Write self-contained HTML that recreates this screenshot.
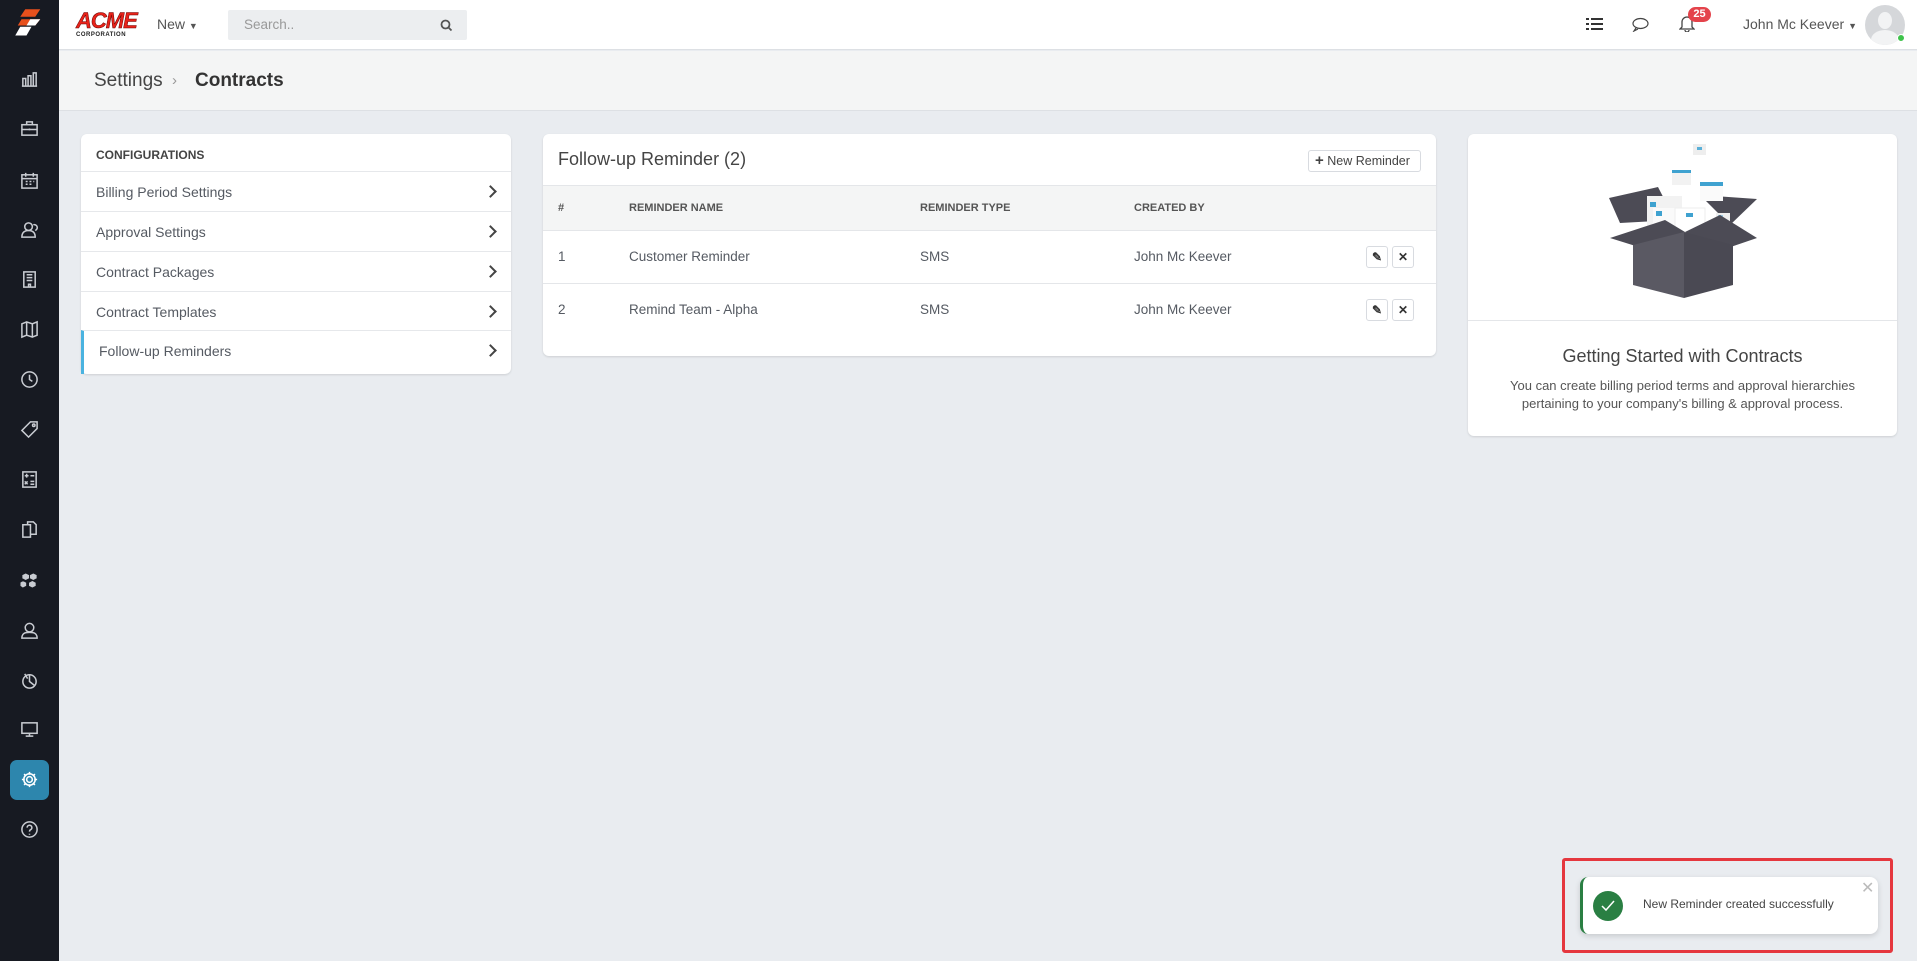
<!DOCTYPE html>
<html><head><meta charset="utf-8"><style>
*{box-sizing:border-box;margin:0;padding:0}
body{width:1917px;height:961px;overflow:hidden;background:#e9ecf0;font-family:"Liberation Sans",sans-serif;color:#555a62;position:relative}
.abs{position:absolute}
#side{left:0;top:0;width:59px;height:961px;background:#171a22}
#side svg{position:absolute;left:20px;width:19px;height:19px;fill:none;stroke:#c9ccd2;stroke-width:1.6}
#top{left:59px;top:0;width:1858px;height:50px;background:#fff;border-bottom:1px solid #dde0e4}
#crumb{left:59px;top:51px;width:1858px;height:60px;background:#f4f5f5;border-bottom:1px solid #dde0e4}
.card{position:absolute;background:#fff;border-radius:6px;box-shadow:0 1px 2px rgba(0,0,0,.12)}
.row{position:absolute;left:0;right:0;border-top:1px solid #e6e8eb;font-size:14px;color:#555a62}
.row span{position:absolute;left:15px}
.chev{position:absolute;right:16px;width:9px;height:9px;border-right:2px solid #444;border-top:2px solid #444;transform:rotate(45deg)}
.th{position:absolute;font-size:11px;font-weight:bold;color:#555;top:16px}
.td{position:absolute;font-size:13.5px;color:#555a62}
.ib{position:absolute;width:22px;height:22px;border:1px solid #d8dbe0;border-radius:3px;background:#fff;font-size:12px;font-weight:bold;text-align:center;line-height:20px;color:#333}
</style></head><body>
<div id="side" class="abs">
<svg viewBox="0 0 24 24" style="top:8px;left:14px;width:30px;height:30px;stroke:none"><polygon points="9,1 21,1 17,7 5,7" fill="#e8501c"/><polygon points="6,9 21,9 17,14 3,14" fill="#e8501c"/><polygon points="5,15 14,15 10,22 1,22" fill="#fff"/><polygon points="13,9 21,9 17,14 10,14" fill="#fff"/></svg>
<svg viewBox="0 0 20 20" style="top:70px"><path d="M3 17V9h3v8M8.5 17V6h3v11M14 17V3h3v14M2 17h16"/></svg>
<svg viewBox="0 0 20 20" style="top:119px"><rect x="2" y="6" width="16" height="11"/><path d="M7 6V3h6v3M2 11h16M10 10v2"/></svg>
<svg viewBox="0 0 20 20" style="top:171px"><rect x="2" y="4" width="16" height="14"/><path d="M2 8h16M6 2v4M14 2v4M6 11h2M10 11h2M14 11h1M6 14h2M10 14h2"/></svg>
<svg viewBox="0 0 20 20" style="top:220px"><circle cx="9" cy="7" r="4"/><path d="M2 18c0-5 3-7 7-7s7 2 7 7zM14 5a3 3 0 0 1 2 6"/></svg>
<svg viewBox="0 0 20 20" style="top:270px"><rect x="4" y="2" width="12" height="16"/><path d="M7 5h6M7 8h6M7 11h6M9 18v-3h2v3"/></svg>
<svg viewBox="0 0 20 20" style="top:320px"><path d="M2 4l5-2 6 2 5-2v14l-5 2-6-2-5 2zM7 2v14M13 4v14"/></svg>
<svg viewBox="0 0 20 20" style="top:370px"><circle cx="10" cy="10" r="8"/><path d="M10 5v5l3 2"/></svg>
<svg viewBox="0 0 20 20" style="top:420px"><path d="M11 2h7v7l-9 9-7-7z"/><circle cx="14.5" cy="5.5" r="1.3"/></svg>
<svg viewBox="0 0 20 20" style="top:470px"><rect x="3" y="2" width="14" height="16"/><path d="M5 6h4M7 4v4M11 6h4M5 12l3 3M8 12l-3 3M11 12h4M11 15h4"/></svg>
<svg viewBox="0 0 20 20" style="top:520px"><path d="M3 5h8v13H3zM8 5V2h6l3 3v10h-6"/></svg>
<svg viewBox="0 0 20 20" style="top:571px;fill:#c9ccd2;stroke:#171a22;stroke-width:1"><path d="M6 2l4 2v4l-4 2-4-2V4zM3 10l4 2v4l-4 2-3-2v-4zM13 10l4 2v4l-4 2-4-2v-4zM14 2l4 2v4l-4 2-4-2V4z"/></svg>
<svg viewBox="0 0 20 20" style="top:621px"><circle cx="10" cy="7" r="4.5"/><path d="M2 18c0-5 3-6 8-6s8 1 8 6z"/></svg>
<svg viewBox="0 0 20 20" style="top:671px"><circle cx="10" cy="11" r="7"/><path d="M10 4v7l5 4M5 3l3 5"/></svg>
<svg viewBox="0 0 20 20" style="top:720px"><rect x="2" y="3" width="16" height="11"/><path d="M10 14v3M6 17h8"/></svg>
<div class="abs" style="left:10px;top:760px;width:39px;height:40px;background:#2d86ad;border-radius:7px"></div>
<svg viewBox="0 0 20 20" style="top:770px;stroke:#fff"><circle cx="10" cy="10" r="3"/><path d="M10 2v3M10 15v3M2 10h3M15 10h3M4.3 4.3l2.1 2.1M13.6 13.6l2.1 2.1M4.3 15.7l2.1-2.1M13.6 6.4l2.1-2.1"/><circle cx="10" cy="10" r="6"/></svg>
<svg viewBox="0 0 20 20" style="top:820px"><circle cx="10" cy="10" r="8"/><path d="M7.5 8a2.5 2.5 0 1 1 3.5 2.3c-1 .5-1 1-1 2M10 14.5v1"/></svg>
</div>
<div id="top" class="abs">
<div class="abs" style="left:17px;top:11px;width:65px;height:28px">
<div style="font:italic 900 22px 'Liberation Sans';color:#e8231a;letter-spacing:-1px;line-height:20px;-webkit-text-stroke:0.5px #600">ACME</div>
<div style="font:bold 6px 'Liberation Sans';color:#222;letter-spacing:0.5px;margin-top:1px">CORPORATION</div></div>
<div class="abs" style="left:98px;top:16px;font-size:14px;color:#555">New <span style="font-size:9px">▼</span></div>
<div class="abs" style="left:169px;top:10px;width:239px;height:30px;background:#eceef0;border-radius:2px">
<span class="abs" style="left:16px;top:7px;font-size:13.5px;color:#999">Search..</span>
<svg class="abs" style="left:212px;top:9px" width="13" height="13" viewBox="0 0 13 13" fill="none" stroke="#555" stroke-width="1.8"><circle cx="5.5" cy="5.5" r="4"/><path d="M8.5 8.5l3 3"/></svg></div>
<svg class="abs" style="left:1527px;top:17px" width="17" height="14" viewBox="0 0 17 14" fill="#333"><rect x="0" y="1" width="3" height="2"/><rect x="5" y="1" width="12" height="2"/><rect x="0" y="6" width="3" height="2"/><rect x="5" y="6" width="12" height="2"/><rect x="0" y="11" width="3" height="2"/><rect x="5" y="11" width="12" height="2"/></svg>
<svg class="abs" style="left:1573px;top:17px" width="17" height="15" viewBox="0 0 17 15" fill="none" stroke="#444" stroke-width="1.2"><ellipse cx="8.5" cy="6.5" rx="7.5" ry="5"/><path d="M4 11l-2 3 4-2"/></svg>
<svg class="abs" style="left:1620px;top:14px" width="16" height="18" viewBox="0 0 16 18" fill="none" stroke="#444" stroke-width="1.3"><path d="M3 13V8a5 5 0 0 1 10 0v5l2 2H1zM6 16a2 2 0 0 0 4 0"/></svg>
<div class="abs" style="left:1629px;top:7px;width:23px;height:15px;background:#e4434b;border-radius:8px;color:#fff;font-size:11px;font-weight:bold;text-align:center;line-height:15px">25</div>
<div class="abs" style="left:1684px;top:16px;font-size:14px;color:#555">John Mc Keever <span style="font-size:9px">▼</span></div>
<div class="abs" style="left:1806px;top:5px;width:40px;height:40px;border-radius:50%;background:#d5d7da;overflow:hidden">
<div class="abs" style="left:13px;top:7px;width:14px;height:17px;border-radius:50%;background:#f2f3f4"></div>
<div class="abs" style="left:6px;top:25px;width:28px;height:20px;border-radius:50% 50% 0 0;background:#f2f3f4"></div></div>
<div class="abs" style="left:1838px;top:34px;width:8px;height:8px;border-radius:50%;background:#3ec34b;border:1px solid #fff"></div>
</div>
<div id="crumb" class="abs">
<span class="abs" style="left:35px;top:19px;font-size:19px;color:#444">Settings</span>
<span class="abs" style="left:113px;top:21px;font-size:15px;color:#999">›</span>
<span class="abs" style="left:136px;top:19px;font-size:19px;font-weight:bold;color:#333">Contracts</span>
</div>

<div class="card" style="left:81px;top:134px;width:430px;height:240px">
<div class="abs" style="left:15px;top:14px;font-size:12px;font-weight:bold;color:#444">CONFIGURATIONS</div>
<div class="row" style="top:37px;height:40px"><span style="top:12px">Billing Period Settings</span><i class="chev" style="top:15px"></i></div>
<div class="row" style="top:77px;height:40px"><span style="top:12px">Approval Settings</span><i class="chev" style="top:15px"></i></div>
<div class="row" style="top:117px;height:40px"><span style="top:12px">Contract Packages</span><i class="chev" style="top:15px"></i></div>
<div class="row" style="top:157px;height:40px"><span style="top:12px">Contract Templates</span><i class="chev" style="top:15px"></i></div>
<div class="row" style="top:196px;height:44px;border-left:3px solid #4ab3e0"><span style="top:12px">Follow-up Reminders</span><i class="chev" style="top:15px"></i></div>
</div>

<div class="card" style="left:543px;top:134px;width:893px;height:222px">
<div class="abs" style="left:15px;top:15px;font-size:18px;color:#444">Follow-up Reminder (2)</div>
<div class="abs" style="left:765px;top:16px;width:113px;height:22px;border:1px solid #d8dbe0;border-radius:3px;font-size:12.5px;color:#444;line-height:20px;padding-left:6px"><b style="font-size:15px">+</b> New Reminder</div>
<div class="abs" style="left:0;top:51px;width:893px;height:46px;background:#f4f5f5;border-top:1px solid #e4e6e9;border-bottom:1px solid #e4e6e9">
<span class="th" style="left:15px">#</span><span class="th" style="left:86px">REMINDER NAME</span><span class="th" style="left:377px">REMINDER TYPE</span><span class="th" style="left:591px">CREATED BY</span></div>
<div class="abs" style="left:0;top:97px;width:893px;height:53px;border-bottom:1px solid #e4e6e9">
<span class="td" style="left:15px;top:18px">1</span><span class="td" style="left:86px;top:18px">Customer Reminder</span><span class="td" style="left:377px;top:18px">SMS</span><span class="td" style="left:591px;top:18px">John Mc Keever</span>
<div class="ib" style="left:823px;top:15px">✎</div><div class="ib" style="left:849px;top:15px">✕</div></div>
<div class="abs" style="left:0;top:150px;width:893px;height:53px">
<span class="td" style="left:15px;top:18px">2</span><span class="td" style="left:86px;top:18px">Remind Team - Alpha</span><span class="td" style="left:377px;top:18px">SMS</span><span class="td" style="left:591px;top:18px">John Mc Keever</span>
<div class="ib" style="left:823px;top:15px">✎</div><div class="ib" style="left:849px;top:15px">✕</div></div>
</div>

<div class="card" style="left:1468px;top:134px;width:429px;height:302px">
<svg class="abs" style="left:112px;top:8px" width="200" height="170" viewBox="0 0 200 170">
<rect x="113" y="2" width="13" height="11" fill="#eee"/><rect x="117" y="5" width="5" height="3" fill="#5ab0d8"/>
<rect x="92" y="28" width="19" height="15" fill="#f2f2f2"/><rect x="92" y="28" width="19" height="3" fill="#3fa2d0"/>
<polygon points="29,56 78,45 95,78 40,81" fill="#4c4b55"/>
<polygon points="120,53 177,57 150,83" fill="#4c4b55"/>
<rect x="120" y="40" width="23" height="19" fill="#fafafa"/><rect x="120" y="40" width="23" height="4" fill="#3fa2d0"/>
<rect x="67" y="54" width="35" height="40" fill="#f2f2f2"/><rect x="70" y="60" width="6" height="5" fill="#3fa2d0"/>
<rect x="73" y="66" width="32" height="30" fill="#fafafa"/><rect x="76" y="69" width="6" height="5" fill="#3fa2d0"/>
<rect x="95" y="66" width="30" height="30" fill="#fff" stroke="#eee"/><rect x="106" y="71" width="7" height="4" fill="#3fa2d0"/>
<rect x="136" y="71" width="14" height="12" fill="#eee"/><rect x="138" y="73" width="5" height="3" fill="#9bcbe6"/>
<polygon points="30,96 85,78 105,90 78,111" fill="#4c4b55"/>
<polygon points="105,90 140,73 177,96 133,111" fill="#4c4b55"/>
<polygon points="53,103 104,90 104,156 53,143" fill="#5a5963"/>
<polygon points="104,90 153,103 153,143 104,156" fill="#4a4953"/>
</svg>
<div class="abs" style="left:0;top:186px;width:429px;border-top:1px solid #e4e6e9"></div>
<div class="abs" style="left:0;top:212px;width:429px;text-align:center;font-size:18px;color:#444">Getting Started with Contracts</div>
<div class="abs" style="left:0;top:243px;width:429px;text-align:center;font-size:13px;line-height:18px;color:#555">You can create billing period terms and approval hierarchies<br>pertaining to your company's billing &amp; approval process.</div>
</div>

<div class="abs" style="left:1562px;top:858px;width:331px;height:95px;border:3px solid #e5373e;border-radius:3px"></div>
<div class="abs" style="left:1580px;top:877px;width:298px;height:57px;background:#fff;border-radius:8px;box-shadow:0 2px 6px rgba(0,0,0,.15);border-left:3px solid #2a7f43">
<div class="abs" style="left:10px;top:14px;width:30px;height:30px;border-radius:50%;background:#2a7f43"></div>
<svg class="abs" style="left:17px;top:22px" width="16" height="14" viewBox="0 0 16 14" fill="none" stroke="#fff" stroke-width="1.5"><path d="M2 7l4 4 8-9"/></svg>
<div class="abs" style="left:60px;top:20px;font-size:12px;color:#444">New Reminder created successfully</div>
<div class="abs" style="left:278px;top:1px;font-size:16px;color:#bbb">✕</div>
</div>
</body></html>
